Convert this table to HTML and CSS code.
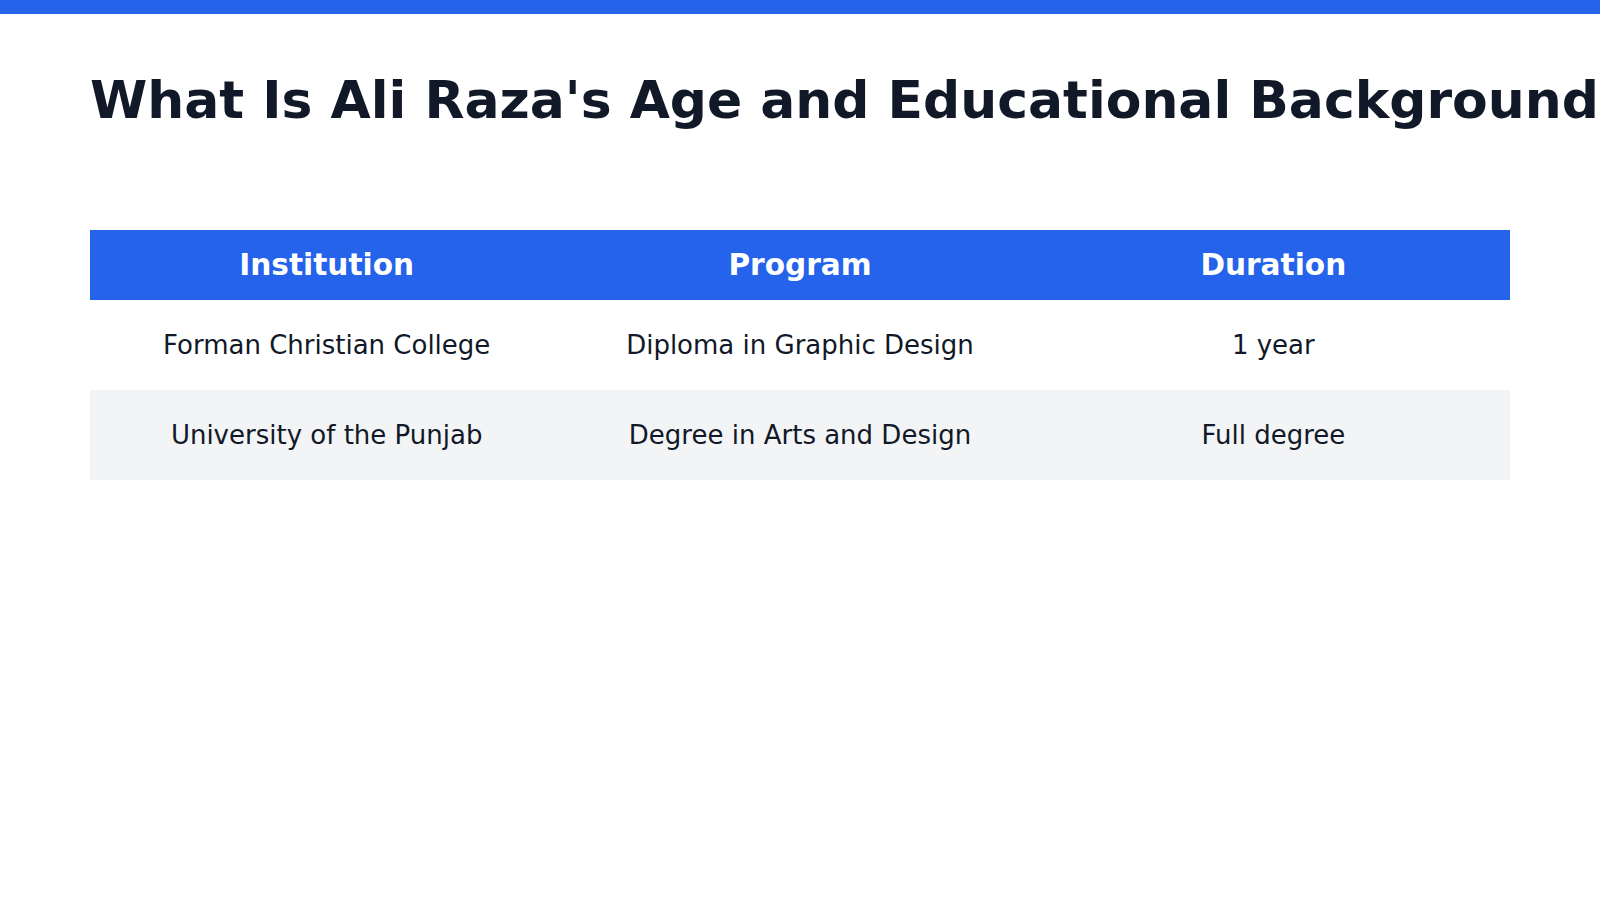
FILE: index.html
```html
<!DOCTYPE html>
<html lang="en">
<head>
<meta charset="utf-8">
<title>Ali Raza Education</title>
<link rel="stylesheet" href="styles.css">
</head>
<body>
<div class="topbar"></div>
<main class="content">
  <h1 class="title">What Is Ali Raza's Age and Educational Background?</h1>
  <table class="edu-table">
    <thead>
      <tr>
        <th>Institution</th>
        <th>Program</th>
        <th>Duration</th>
      </tr>
    </thead>
    <tbody>
      <tr>
        <td>Forman Christian College</td>
        <td>Diploma in Graphic Design</td>
        <td>1 year</td>
      </tr>
      <tr class="alt">
        <td>University of the Punjab</td>
        <td>Degree in Arts and Design</td>
        <td>Full degree</td>
      </tr>
    </tbody>
  </table>
</main>
</body>
</html>
```
FILE: styles.css
```css
html, body {
  margin: 0;
  padding: 0;
  background: #ffffff;
  overflow: hidden;
}
body {
  font-family: "DejaVu Sans", "Liberation Sans", sans-serif;
  color: #111827;
  width: 1600px;
  height: 900px;
}
.topbar {
  height: 14px;
  background: #2563eb;
}
.content {
  padding: 55px 90px 0 90px;
}
.title {
  margin: 0;
  font-size: 51.95px;
  line-height: 62px;
  font-weight: 700;
  color: #111827;
  white-space: nowrap;
}
.edu-table {
  margin-top: 99px;
  width: 1420px;
  border-collapse: collapse;
  table-layout: fixed;
}
.edu-table th {
  background: #2563eb;
  color: #ffffff;
  font-size: 29.6px;
  font-weight: 700;
  line-height: 38px;
  padding: 16px 16px;
  text-align: center;
}
.edu-table td {
  font-size: 26px;
  line-height: 32px;
  padding: 29px 16px;
  text-align: center;
  color: #111827;
}
.edu-table tr.alt td {
  background: #f3f4f6;
}
```
